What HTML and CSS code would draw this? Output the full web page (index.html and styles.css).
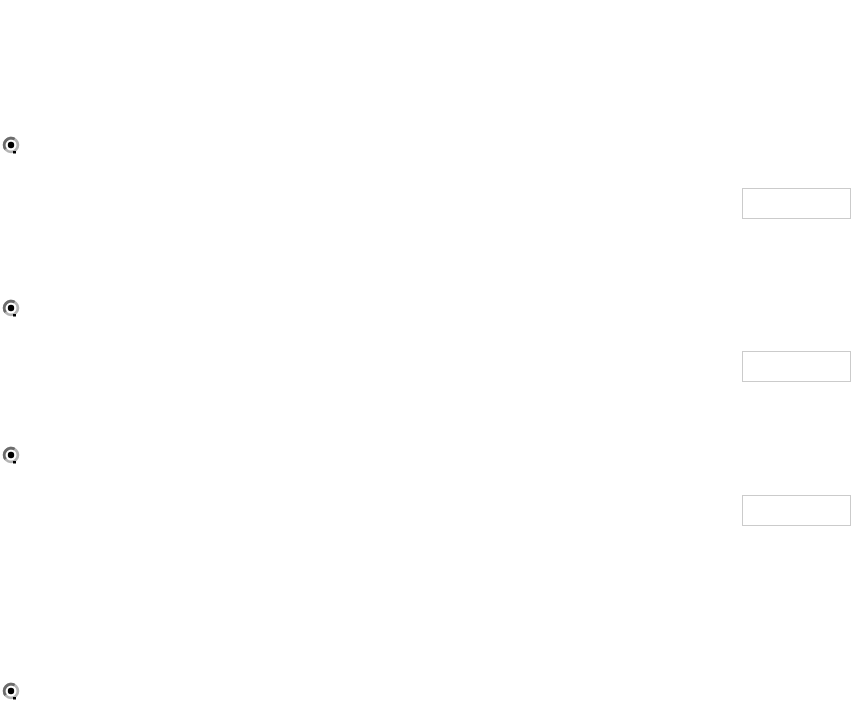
FILE: index.html
```html
<!DOCTYPE html>
<html lang="en">
<head>
  <meta charset="UTF-8" />
  <meta name="viewport" content="width=device-width, initial-scale=1" />
  <title>Options</title>
  <link rel="stylesheet" href="styles.css">
</head>
<body>

  <form class="option-list">

    <!-- Option 1 -->
    <div class="option option-first">
      <label class="radio">
        <svg width="18" height="18" viewBox="0 0 18 18">
          <circle cx="9" cy="9" r="6.9" fill="#fff" stroke="#b4b4b4" stroke-width="2.8"/>
          <path d="M3.6 13.2 A6.9 6.9 0 0 1 12.6 3.1" fill="none" stroke="#6c6c6c" stroke-width="2.8"/>
          <circle cx="9" cy="9" r="3.2" fill="#000"/>
          <rect x="11" y="15" width="3" height="2.5" fill="#000"/>
        </svg>
      </label>
      <div class="field-row">
        <input type="text" class="field" />
      </div>
    </div>

    <!-- Option 2 -->
    <div class="option option-second">
      <label class="radio">
        <svg width="18" height="18" viewBox="0 0 18 18">
          <circle cx="9" cy="9" r="6.9" fill="#fff" stroke="#b4b4b4" stroke-width="2.8"/>
          <path d="M3.6 13.2 A6.9 6.9 0 0 1 12.6 3.1" fill="none" stroke="#6c6c6c" stroke-width="2.8"/>
          <circle cx="9" cy="9" r="3.2" fill="#000"/>
          <rect x="11" y="15" width="3" height="2.5" fill="#000"/>
        </svg>
      </label>
      <div class="field-row">
        <input type="text" class="field" />
      </div>
    </div>

    <!-- Option 3 -->
    <div class="option option-third">
      <label class="radio">
        <svg width="18" height="18" viewBox="0 0 18 18">
          <circle cx="9" cy="9" r="6.9" fill="#fff" stroke="#b4b4b4" stroke-width="2.8"/>
          <path d="M3.6 13.2 A6.9 6.9 0 0 1 12.6 3.1" fill="none" stroke="#6c6c6c" stroke-width="2.8"/>
          <circle cx="9" cy="9" r="3.2" fill="#000"/>
          <rect x="11" y="15" width="3" height="2.5" fill="#000"/>
        </svg>
      </label>
      <div class="field-row">
        <input type="text" class="field" />
      </div>
    </div>

    <!-- Option 4 -->
    <div class="option option-last">
      <label class="radio">
        <svg width="18" height="18" viewBox="0 0 18 18">
          <circle cx="9" cy="9" r="6.9" fill="#fff" stroke="#b4b4b4" stroke-width="2.8"/>
          <path d="M3.6 13.2 A6.9 6.9 0 0 1 12.6 3.1" fill="none" stroke="#6c6c6c" stroke-width="2.8"/>
          <circle cx="9" cy="9" r="3.2" fill="#000"/>
          <rect x="11" y="15" width="3" height="2.5" fill="#000"/>
        </svg>
      </label>
    </div>

  </form>

</body>
</html>
```

FILE: styles.css
```css
body {
  margin: 0;
  background: #fff;
  font-family: "Liberation Sans", Arial, sans-serif;
  overflow: hidden;
}
.option-list {
  display: flex;
  flex-direction: column;
  padding-top: 136px;
}
.option {
  display: flex;
  flex-direction: column;
}
.option-second {
  margin-top: 80px;
}
.option-third {
  margin-top: 64px;
}
.option-last {
  margin-top: 156px;
}
.radio {
  display: flex;
  width: 18px;
  height: 18px;
  margin-left: 2px;
}
.field-row {
  display: flex;
  justify-content: flex-end;
  margin-top: 34px;
}
.option-third .field-row {
  margin-top: 31px;
}
.field {
  box-sizing: border-box;
  width: 109px;
  height: 31px;
  margin: 0;
  padding: 0 4px;
  border: 1px solid #cbcbcb;
  border-radius: 0;
  background: #fff;
  font: 13px "Liberation Sans", Arial, sans-serif;
  outline: none;
}
```
